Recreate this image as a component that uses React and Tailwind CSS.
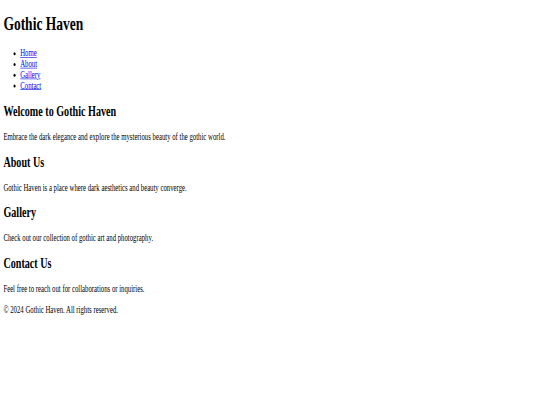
export default function App() {
  const sections = [
    { titulo: 'Welcome to Gothic Haven', texto: 'Embrace the dark elegance and explore the mysterious beauty of the gothic world.' },
    { titulo: 'About Us', texto: 'Gothic Haven is a place where dark aesthetics and beauty converge.' },
    { titulo: 'Gallery', texto: 'Check out our collection of gothic art and photography.' },
    { titulo: 'Contact Us', texto: 'Feel free to reach out for collaborations or inquiries.' },
  ];
  const links = ['Home', 'About', 'Gallery', 'Contact'];

  return (
    <div className="w-[540px] h-[405px] overflow-hidden bg-white">
      <div className="w-[1280px] origin-top-left scale-x-[0.421875] scale-y-[0.6] px-2 pt-[21.44px] font-['Liberation_Serif',serif] text-[16px] leading-[normal] text-black">
        <header>
          <h1 className="text-[32px] font-bold mb-[21.44px]">Gothic Haven</h1>
          <nav>
            <ul className="list-disc pl-10 my-4">
              {links.map((l) => (
                <li key={l}>
                  <a href="#" className="text-[#0000ee] underline">{l}</a>
                </li>
              ))}
            </ul>
          </nav>
        </header>
        <main>
          {sections.map((s) => (
            <section key={s.titulo}>
              <h2 className="text-[24px] font-bold my-[19.92px]">{s.titulo}</h2>
              <p className="my-4">{s.texto}</p>
            </section>
          ))}
        </main>
        <footer>
          <p className="my-4">© 2024 Gothic Haven. All rights reserved.</p>
        </footer>
      </div>
    </div>
  );
}
